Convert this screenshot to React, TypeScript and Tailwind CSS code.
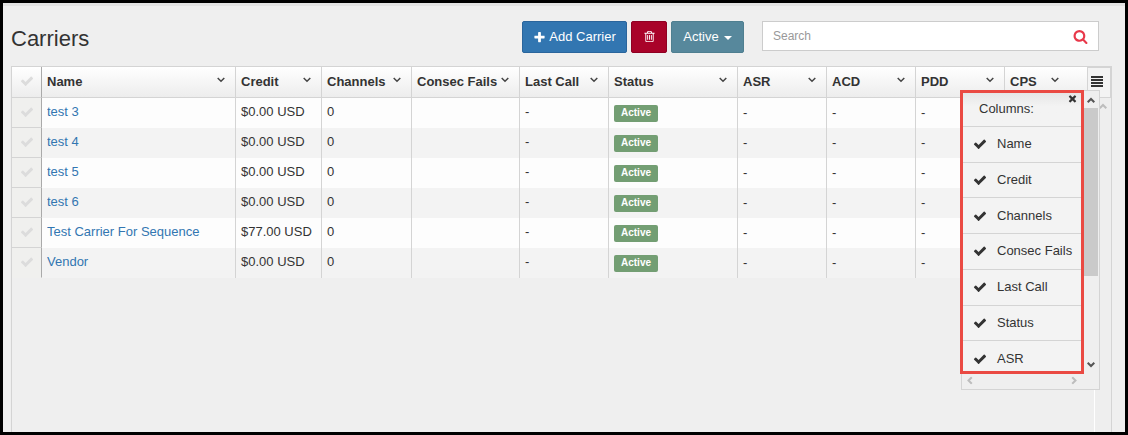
import React from "react";

const CHECK =
  "M1671 566q0 40-28 68l-724 724-136 136q-28 28-68 28t-68-28l-136-136-362-362q-28-28-28-68t28-68l136-136q28-28 68-28t68 28l294 295 656-657q28-28 68-28t68 28l136 136q28 28 28 68z";
const PLUS =
  "M1600 736v192q0 40-28 68t-68 28h-416v416q0 40-28 68t-68 28h-192q-40 0-68-28t-28-68v-416h-416q-40 0-68-28t-28-68v-192q0-40 28-68t68-28h416v-416q0-40 28-68t68-28h192q40 0 68 28t28 68v416h416q40 0 68 28t28 68z";
const TRASH =
  "M704 736v576q0 14-9 23t-23 9h-64q-14 0-23-9t-9-23v-576q0-14 9-23t23-9h64q14 0 23 9t9 23zm256 0v576q0 14-9 23t-23 9h-64q-14 0-23-9t-9-23v-576q0-14 9-23t23-9h64q14 0 23 9t9 23zm256 0v576q0 14-9 23t-23 9h-64q-14 0-23-9t-9-23v-576q0-14 9-23t23-9h64q14 0 23 9t9 23zm128 724v-948h-896v948q0 22 7 40.500t14.500 27 10.500 8.500h832q3 0 10.500-8.500t14.500-27 7-40.500zm-672-1076h448l-48-117q-7-9-17-11h-317q-10 2-17 11zm928 32v64q0 14-9 23t-23 9h-96v948q0 83-47 143.500t-113 60.500h-832q-66 0-113-58.500t-47-141.500v-952h-96q-14 0-23-9t-9-23v-64q0-14 9-23t23-9h309l70-167q15-37 54-63t79-26h320q40 0 79 26t54 63l70 167h309q14 0 23 9t9 23z";
const SEARCH =
  "M1216 832q0-185-131.500-316.500t-316.500-131.500-316.500 131.500-131.500 316.500 131.500 316.500 316.500 131.500 316.500-131.500 131.500-316.500zm512 832q0 52-38 90t-90 38q-54 0-90-38l-343-342q-179 124-399 124-143 0-273.500-55.500t-225-150-150-225-55.500-273.500 55.500-273.500 150-225 225-150 273.500-55.500 273.500 55.500 225 150 150 225 55.500 273.500q0 220-124 399l343 343q37 37 37 90z";
const TIMES =
  "M1490 1322q0 40-28 68l-136 136q-28 28-68 28t-68-28l-294-294-294 294q-28 28-68 28t-68-28l-136-136q-28-28-28-68t28-68l294-294-294-294q-28-28-28-68t28-68l136-136q28-28 68-28t68 28l294 294 294-294q28-28 68-28t68 28l136 136q28 28 28 68t-28 68l-294 294 294 294q28 28 28 68z";

function Glyph({ d, className }: { d: string; className: string }) {
  return (
    <svg viewBox="0 0 1792 1792" fill="currentColor" aria-hidden="true" className={className}>
      <path d={d} />
    </svg>
  );
}

function Chevron({ className }: { className: string }) {
  return (
    <svg viewBox="0 0 8 6" fill="none" stroke="currentColor" aria-hidden="true" className={className}>
      <path d="M0.7 1 L4 4.300 L7.300 1" strokeWidth="1.500" />
    </svg>
  );
}

function ScrollArrow({ className }: { className: string }) {
  return (
    <svg viewBox="0 0 8 7" fill="none" stroke="currentColor" aria-hidden="true" className={className}>
      <path d="M0.7 5.300 L4 2 L7.300 5.300" strokeWidth="2" />
    </svg>
  );
}

const columns = [
  { name: "Name", width: "" },
  { name: "Credit", width: "w-[86px]" },
  { name: "Channels", width: "w-[90px]" },
  { name: "Consec Fails", width: "w-[108px]" },
  { name: "Last Call", width: "w-[89px]" },
  { name: "Status", width: "w-[129px]" },
  { name: "ASR", width: "w-[89px]" },
  { name: "ACD", width: "w-[89px]" },
  { name: "PDD", width: "w-[89px]" },
  { name: "CPS", width: "w-[83px]" },
];

const carriers = [
  { name: "test 3", credit: "$0.00 USD" },
  { name: "test 4", credit: "$0.00 USD" },
  { name: "test 5", credit: "$0.00 USD" },
  { name: "test 6", credit: "$0.00 USD" },
  { name: "Test Carrier For Sequence", credit: "$77.00 USD" },
  { name: "Vendor", credit: "$0.00 USD" },
];

function RowCheck({ label }: { label: string }) {
  return (
    <label className="grid h-full cursor-pointer place-items-center pb-[2px] text-[#dcdcdc]">
      <input type="checkbox" aria-label={label} className="col-start-1 row-start-1 size-4 appearance-none" />
      <Glyph d={CHECK} className="col-start-1 row-start-1 size-[14px]" />
    </label>
  );
}

function Toolbar() {
  return (
    <header className="flex items-start pl-2 pr-[26px] pt-[15px]">
      <h1 className="flex-1 pt-[3px] text-[22px] leading-[30px] text-[#333]">Carriers</h1>
      <div className="flex gap-1 text-[13px] text-white">
        <button className="flex h-8 w-[105px] items-center justify-center gap-[3px] rounded-[2px] border border-[#2a659c] bg-[#3276b1]">
          <Glyph d={PLUS} className="size-[13px]" />
          Add Carrier
        </button>
        <button aria-label="Delete" className="grid h-8 w-9 place-items-center rounded-[2px] border border-[#8f0022] bg-[#a90329] pb-[2px]">
          <Glyph d={TRASH} className="size-[13px]" />
        </button>
        <button className="flex h-8 w-[73px] items-center justify-center gap-[5px] rounded-[2px] border border-[#4f7f90] bg-[#57889c]">
          Active
          <span className="mt-[2px] border-x-4 border-t-4 border-x-transparent border-t-white" />
        </button>
      </div>
      <div className="ml-[18px] flex h-[30px] w-[337px] items-center border border-[#ccc] bg-white px-[10px]">
        <input
          type="text"
          aria-label="Search"
          placeholder="Search"
          className="min-w-0 flex-1 text-[12px] text-[#333] outline-none placeholder:text-[#999]"
        />
        <button aria-label="Run search">
          <Glyph d={SEARCH} className="size-[15px] text-[#e8384a]" />
        </button>
      </div>
    </header>
  );
}

function CarrierTable() {
  return (
    <table className="w-full table-fixed border-separate border-spacing-0 text-left">
      <colgroup>
        <col className="w-[30px]" />
        {columns.map((c) => (
          <col key={c.name} className={c.width} />
        ))}
      </colgroup>
      <thead>
        <tr className="h-[31px] bg-linear-to-b from-white to-[#ececec]">
          <th className="border-r border-b border-r-[#aaa] border-b-[#d4d4d4] p-0">
            <RowCheck label="Select all carriers" />
          </th>
          {columns.map((c) => (
            <th key={c.name} className="border-r border-b border-[#d4d4d4] p-0 pl-[5px]">
              <div className={c.name === "CPS" ? "flex items-center pr-[28px]" : "flex items-center pr-[10px]"}>
                <span className="flex-1 whitespace-nowrap leading-5">{c.name}</span>
                <button aria-label={c.name + " column menu"} className="mb-[4px]">
                  <Chevron className="h-[6px] w-[8px] text-[#444]" />
                </button>
              </div>
            </th>
          ))}
        </tr>
      </thead>
      <tbody>
        {carriers.map((row, i) => (
          <tr key={row.name} className="group h-[30px] odd:bg-[#fdfdfd] even:bg-[#f3f3f3]">
            <td className="border-r border-b border-r-[#aaa] border-b-[#d4d4d4] bg-[#f0f0ee] p-0 group-last:border-b-[#f0f0ee]">
              <RowCheck label={"Select " + row.name} />
            </td>
            <td className="border-r border-[#d4d4d4] p-0 pl-[5px]">
              <a href={"#carrier-" + (i + 1)} className="block truncate pb-[2px] text-[#3276b1]">
                {row.name}
              </a>
            </td>
            <td className="border-r border-[#d4d4d4] p-0 pb-[2px] pl-[5px]">{row.credit}</td>
            <td className="border-r border-[#d4d4d4] p-0 pb-[2px] pl-[5px]">0</td>
            <td className="border-r border-[#d4d4d4] p-0" />
            <td className="border-r border-[#d4d4d4] p-0 pb-[2px] pl-[5px]">-</td>
            <td className="border-r border-[#d4d4d4] p-0 pl-[5px]">
              <span className="flex h-[17px] w-11 items-center justify-center rounded-[2px] bg-[#739e73] pb-px text-[10px] font-bold text-white">
                Active
              </span>
            </td>
            <td className="border-r border-[#d4d4d4] p-0 pl-[5px]">-</td>
            <td className="border-r border-[#d4d4d4] p-0 pl-[5px]">-</td>
            <td className="border-r border-[#d4d4d4] p-0 pl-[5px]">-</td>
            <td className="border-r border-[#d4d4d4] p-0" />
          </tr>
        ))}
      </tbody>
    </table>
  );
}

function ColumnMenu() {
  return (
    <div className="absolute right-[11px] top-[23px] flex w-[140px] flex-col bg-[#efefef]">
      <div className="flex">
        <div className="h-[284px] w-[124px] overflow-hidden border-3 border-[#ea4a43] bg-[#f3f3f3]">
          <div className="flex h-[34px] items-start justify-between border-b border-[#d4d4d4] bg-linear-to-b from-[#e6e6e6] to-[#f3f3f3] to-40% pl-4 pr-[3px]">
            <span className="pt-[6px] leading-5">Columns:</span>
            <button aria-label="Close menu">
              <Glyph d={TIMES} className="size-[11px] text-[#333]" />
            </button>
          </div>
          <ul className="grid h-[250px] auto-rows-fr">
            {columns.slice(0, 7).map((c) => (
              <li key={c.name} className="border-b border-[#d4d4d4]">
                <button className="flex h-full w-full items-center gap-[10px] pl-[10px] text-left whitespace-nowrap">
                  <Glyph d={CHECK} className="size-[14px] shrink-0 text-[#333]" />
                  {c.name}
                </button>
              </li>
            ))}
          </ul>
        </div>
        <div className="flex w-4 flex-col items-start border-t border-r border-[#d4d4d4]">
          <div className="grid h-[17px] w-[14px] place-items-center pt-[2px]">
            <ScrollArrow className="h-[7px] w-[8px] text-[#555]" />
          </div>
          <div className="h-[168px] w-[14px] bg-[#cacaca]" />
          <div className="flex-1" />
          <div className="grid h-[17px] w-[14px] place-items-center pb-[2px]">
            <ScrollArrow className="h-[7px] w-[8px] rotate-180 text-[#555]" />
          </div>
        </div>
      </div>
      <div className="ml-px flex h-4 items-start justify-between border-r border-b border-l border-[#d4d4d4] pl-1 pr-[21px] pt-[3px] text-[#bdbdbd]">
        <ScrollArrow className="h-[7px] w-[8px] -rotate-90" />
        <ScrollArrow className="h-[7px] w-[8px] rotate-90" />
      </div>
    </div>
  );
}

export default function App() {
  return (
    <main className="flex min-h-screen flex-col border-3 border-black bg-[#efefef] font-['Liberation_Sans',Arial,sans-serif] text-[13px] leading-[18px] text-[#333]">
      <div className="h-[3px] bg-[#e3e3e3]" />
      <Toolbar />
      <section
        aria-label="Carriers"
        className="relative ml-2 mr-[13px] mt-3 flex flex-1 border-t border-r border-l border-[#d4d4d4]"
      >
        <div className="min-w-0 flex-1">
          <CarrierTable />
        </div>
        <div className="flex w-[23px] flex-col">
          <button
            aria-label="Table menu"
            className="grid h-[31px] place-items-center border-t border-r border-b border-[#d4d4d4] bg-[#f3f3f3] pb-[3px] pr-[4px]"
          >
            <svg viewBox="0 0 12 11" fill="#333" aria-hidden="true" className="h-[11px] w-3">
              <path d="M0 0h12v2H0zM0 3h12v2H0zM0 6h12v2H0zM0 9h12v2H0z" />
            </svg>
          </button>
          <div className="ml-[6px] flex flex-1 justify-center border-l border-white bg-[#eeeeee] pt-[5px]">
            <ScrollArrow className="h-[7px] w-[8px] text-[#bdbdbd]" />
          </div>
        </div>
        <ColumnMenu />
      </section>
    </main>
  );
}
